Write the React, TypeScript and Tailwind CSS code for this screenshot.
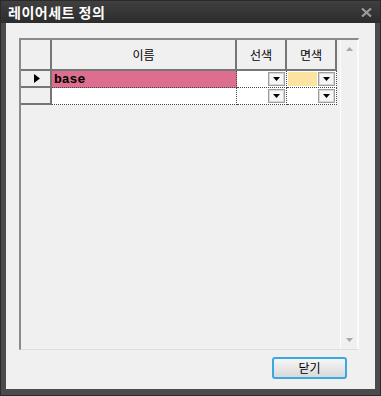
import React from "react";

const KR = "font-['Noto_Sans_CJK_KR','Noto_Sans',sans-serif]";

function DropBtn() {
  return (
    <div className="w-[17px] h-[14px] border border-[#9e9e9e] bg-[#f6f6f6] flex items-center justify-center shadow-[inset_0_0_0_1px_#d8d8d8]">
      <svg width="7" height="4" viewBox="0 0 7 4">
        <polygon points="0,0 7,0 3.5,4" fill="#000" />
      </svg>
    </div>
  );
}

function HeaderCell({ w, label }: { w: string; label?: string }) {
  return (
    <div className={`${w} h-full border-r-2 border-[#767676] flex items-center justify-center text-[12px] text-black`}>
      {label}
    </div>
  );
}

export default function App() {
  return (
    <div className={`w-[381px] h-[396px] bg-[#4b4b4b] border border-[#2a2a2a] flex flex-col ${KR}`}>
      <div className="h-[22px] shrink-0 bg-gradient-to-b from-[#404040] to-[#2c2c2c] flex items-center justify-between pl-[7px] pr-[8px]">
        <span className="text-white font-bold text-[14px] leading-none tracking-[0.5px]">레이어세트 정의</span>
        <svg width="11" height="9" viewBox="0 0 11 9">
          <path d="M1 0.5 L10 8.5 M10 0.5 L1 8.5" stroke="#9c9c9c" strokeWidth="2.2" />
        </svg>
      </div>
      <div className="flex-1 px-[5px] pb-[6px] flex">
        <div className="flex-1 bg-[#f0f0f0] flex flex-col pt-[15px] pl-[13px]">
          <div className="w-[340px] h-[312px] border-l-2 border-t-2 border-[#8a8a8a] border-r border-b border-r-[#fafafa] border-b-[#dedede] flex">
            <div className="w-[316px] flex flex-col">
              <div className="h-[31px] flex border-b-2 border-[#767676]">
                <HeaderCell w="w-[31px]" />
                <HeaderCell w="w-[185px]" label="이름" />
                <HeaderCell w="w-[50px]" label="선색" />
                <HeaderCell w="w-[50px]" label="면색" />
              </div>
              {[0, 1].map((i) => (
                <div key={i} className="h-[17px] flex">
                  <div className="w-[31px] h-full border-r-2 border-b-2 border-[#767676] flex items-center justify-center pl-[2px]">
                    {i === 0 && (
                      <svg width="6" height="9" viewBox="0 0 6 9">
                        <polygon points="0,0 6,4.5 0,9" fill="#000" />
                      </svg>
                    )}
                  </div>
                  <div className={`w-[185px] h-full border-r border-b border-dotted border-[#444] flex items-center pl-[2px] ${i === 0 ? "bg-[#dd6e90]" : "bg-white"}`}>
                    {i === 0 && (
                      <span className="font-['Liberation_Mono',monospace] font-bold text-[13px] leading-none text-black">base</span>
                    )}
                  </div>
                  <div className="w-[50px] h-full border-r border-b border-dotted border-[#444] bg-white flex items-center justify-end pr-[1px]">
                    <DropBtn />
                  </div>
                  <div className="w-[50px] h-full border-r border-b border-dotted border-[#444] bg-white flex items-center pr-[1px]">
                    <div className={`flex-1 h-[14px] mx-[1px] ${i === 0 ? "bg-[#fce4a0]" : "bg-white"}`} />
                    <DropBtn />
                  </div>
                </div>
              ))}
            </div>
            <div className="w-[3px]" />
            <div className="w-[18px] h-full border-l border-r border-[#fcfcfc] bg-[#f0f0f0] flex flex-col items-center justify-between pt-[7px] pb-[7px]">
              <svg width="7" height="4" viewBox="0 0 7 4">
                <polygon points="3.5,0 7,4 0,4" fill="#a8a8a8" />
              </svg>
              <svg width="7" height="4" viewBox="0 0 7 4">
                <polygon points="0,0 7,0 3.5,4" fill="#a8a8a8" />
              </svg>
            </div>
          </div>
          <div className="flex justify-end pr-[28px] mt-[7px]">
            <div className="w-[75px] h-[22px] rounded-[3px] border-2 border-[#3aa9df] bg-gradient-to-b from-[#f6f6f6] to-[#d9d9d9] flex items-center justify-center text-[12px] text-black leading-none">
              닫기
            </div>
          </div>
        </div>
      </div>
    </div>
  );
}
